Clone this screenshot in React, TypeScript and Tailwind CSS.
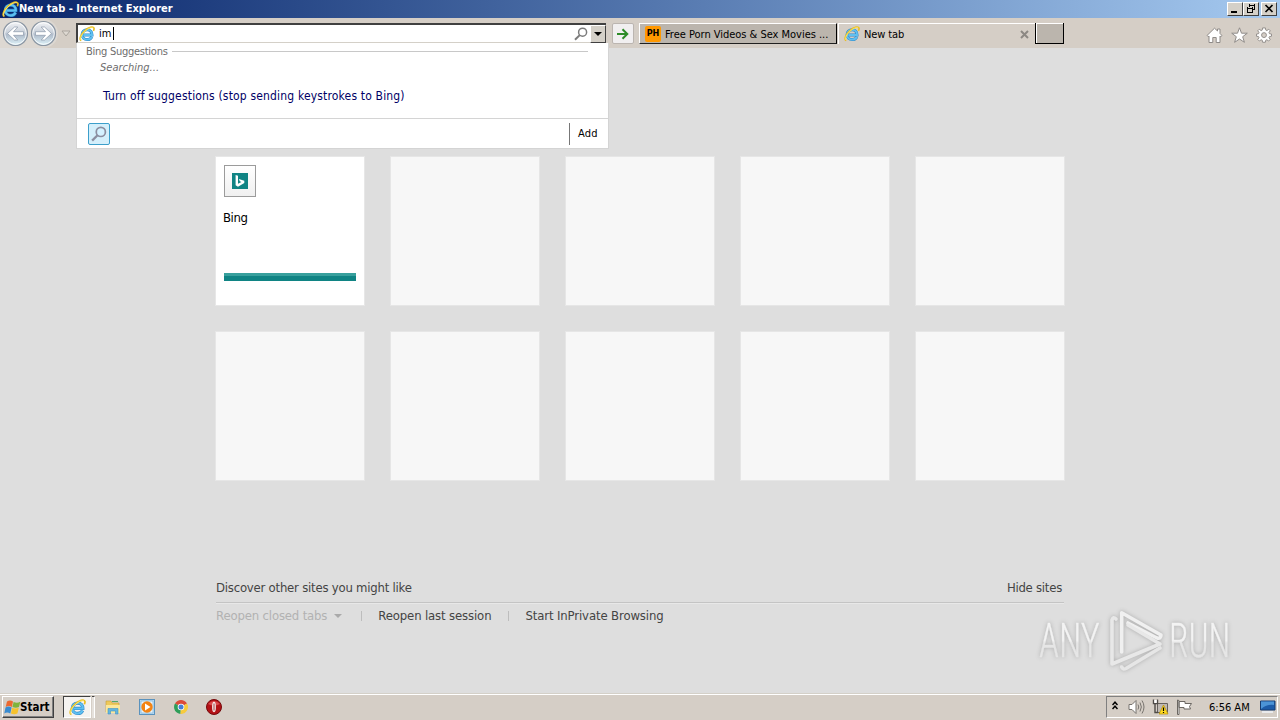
import React from 'react';

const IeLogo: React.FC<{ size?: number }> = ({ size = 16 }) => (
  <svg width={size} height={size} viewBox="0 0 16 16" className="shrink-0" fill="none">
    <path d="M12.8 10.8C12 12.5 10.3 13.6 8.3 13.6C5.2 13.6 3.1 11.5 3.1 8.7C3.1 5.8 5.3 3.8 8.2 3.8C11.2 3.8 13.1 5.8 13 8.9H4.5" stroke="#2b86c8" strokeWidth="3" />
    <path d="M12.8 10.8C12 12.5 10.3 13.6 8.3 13.6C5.2 13.6 3.1 11.5 3.1 8.7C3.1 5.8 5.3 3.8 8.2 3.8C11.2 3.8 13.1 5.8 13 8.9H4.5" stroke="#5fc0f0" strokeWidth="2" />
    <path d="M2.3 14.6C-.3 13.8 1.6 8.4 5.7 4.8C9.4 1.4 14.4-.2 15 2.3C15.2 3.2 14.8 4.2 14.4 4.9" stroke="#e9bd20" strokeWidth="1.6" />
    <path d="M2 14C.6 12.4 2.9 8 6.3 5C9.2 2.3 12.7.9 14.2 1.9" stroke="#fff17c" strokeWidth=".8" />
  </svg>
);

const NavButton: React.FC<{ forward?: boolean }> = ({ forward }) => (
  <svg width="28" height="28" viewBox="0 0 28 28" className="shrink-0">
    <defs>
      <linearGradient id={forward ? 'fwd' : 'back'} x1="0" y1="0" x2="0" y2="1">
        <stop offset="0" stopColor="#f4f5f7" />
        <stop offset=".45" stopColor="#c9d0da" />
        <stop offset=".55" stopColor="#b0bccb" />
        <stop offset="1" stopColor="#dff4fa" />
      </linearGradient>
    </defs>
    <circle cx="14.5" cy="14.5" r="12" fill={forward ? 'url(#fwd)' : 'url(#back)'} stroke="#8a95a2" strokeWidth="1.2" />
    <circle cx="14.5" cy="14.5" r="10.8" fill="none" stroke="#fff" strokeOpacity=".8" />
    <path
      transform={forward ? 'rotate(180 14.25 14.25)' : 'translate(.5 .5)'}
      d="M6 14L13 7.5H16.3L12 12.2H22V15.8H12L16.3 20.5H13Z"
      fill="#fff"
      stroke="#8d99aa"
      strokeWidth=".7"
    />
  </svg>
);

const Magnifier: React.FC<{ size: number; colour: string; fill?: string }> = ({ size, colour, fill = 'none' }) => (
  <svg width={size} height={size} viewBox="0 0 14 14">
    <circle cx="8.6" cy="5.2" r="4" fill={fill} stroke={colour} strokeWidth="1.5" />
    <path d="M5.7 8.1L1 12.8" stroke={colour} strokeWidth="2" />
  </svg>
);

const WindowButton: React.FC<{ children: React.ReactNode }> = ({ children }) => (
  <div className="h-[14px] w-4 border border-t-white border-l-white border-r-[#404040] border-b-[#404040] bg-[#d4d0c8]">
    <svg width="14" height="12" viewBox="0 0 14 12" fill="none" stroke="#000" shapeRendering="crispEdges">
      {children}
    </svg>
  </div>
);

const TitleBar: React.FC = () => (
  <div className="flex h-[18px] items-center bg-linear-to-r from-[#0a246a] to-[#a6caf0] pl-[2px] pr-[3px]">
    <IeLogo size={17} />
    <span className="whitespace-nowrap pt-px text-[11px] font-bold text-white tracking-[0.03px]">New tab - Internet Explorer</span>
    <div className="ml-auto flex">
      <WindowButton>
        <path d="M3 9H9" strokeWidth="2" />
      </WindowButton>
      <WindowButton>
        <path d="M5 2H11M5.5 1V4M10.5 1V7M9 6.5H11M3 5H9M3.5 4V10M8.5 4V10M3 9.5H9" />
      </WindowButton>
      <div className="ml-[2px]">
        <WindowButton>
          <path d="M3.5 2L10.5 9M10.5 2L3.5 9" strokeWidth="1.7" shapeRendering="auto" />
        </WindowButton>
      </div>
    </div>
  </div>
);

const SuggestionList: React.FC = () => (
  <div className="absolute left-0 top-5 z-10 flex h-[106px] w-[533px] flex-col border border-t-0 border-[#d4d4d4] bg-white">
    <div className="flex h-4 items-center pl-[9px] pr-[20px]">
      <span className="whitespace-nowrap pt-[2px] text-[11px] tracking-[-0.26px] text-[#6d6d6d]">Bing Suggestions</span>
      <div className="ml-1 h-px flex-1 bg-[#c8c8c8]" />
    </div>
    <div className="h-4 pl-[23px] text-[11px] leading-[18px] italic tracking-[0.01px] text-[#6d6d6d]">Searching...</div>
    <div className="mt-3 h-[18px] whitespace-nowrap pl-[26px] text-[12px] leading-[18px] tracking-[0.17px] text-[#000066]">
      Turn off suggestions (stop sending keystrokes to Bing)
    </div>
    <div className="mt-auto flex h-[30px] items-center border-t border-[#d4d4d4] pl-[11px]">
      <div className="flex h-[22px] w-[22px] items-center justify-center rounded-[2px] border border-[#3c9fcb] bg-[#d4effb]">
        <Magnifier size={16} colour="#8b8ea0" fill="#d4f1ff" />
      </div>
      <div className="ml-auto flex h-[22px] w-[39px] items-center border-l border-[#777] pl-2 pt-[2px] text-[11px] tracking-[0.2px] text-black">Add</div>
    </div>
  </div>
);

const AddressBar: React.FC = () => (
  <div className="relative ml-[5px] h-[21px] w-[530px] shrink-0">
    <div className="flex h-5 items-center border-t-2 border-l-2 border-b border-t-[#404040] border-l-[#404040] border-b-[#d4d0c8] bg-white pl-px">
      <IeLogo />
      <span className="ml-1 pt-[2px] text-[11px] text-black">im</span>
      <div className="ml-[2px] h-[13px] w-px bg-black" />
      <div className="ml-auto mr-[2px]">
        <Magnifier size={14} colour="#7b7b7b" />
      </div>
      <div className="flex h-[18px] w-4 items-center justify-center border border-t-white border-l-white border-r-[#404040] border-b-[#404040] bg-[#d4d0c8]">
        <svg width="8" height="4" viewBox="0 0 8 4">
          <path d="M0 0H8L4 4Z" />
        </svg>
      </div>
    </div>
    <SuggestionList />
  </div>
);

const BrowserBar: React.FC = () => (
  <div className="flex h-[30px] bg-[#d5cec6] pt-[5px]">
    <div className="-mt-1 flex h-[29px] w-[58px] shrink-0 rounded-r-2xl bg-[#ddd8d2] pl-[1px]">
      <NavButton />
      <NavButton forward />
    </div>
    <svg width="10" height="8" viewBox="0 0 10 8" className="ml-[3px] mt-[7px] shrink-0">
      <path d="M1 1H9L5 6Z" fill="#ded9d2" stroke="#aaa59e" />
    </svg>
    <AddressBar />
    <div className="ml-[6px] flex h-[21px] w-[22px] shrink-0 items-center justify-center rounded-[2px] border border-[#bbb5b0] bg-[#f1eff0]">
      <svg width="12" height="12" viewBox="0 0 12 12" fill="none" stroke="#2d8c28" strokeWidth="2">
        <path d="M0 6H10M5.5 1.2L10.3 6L5.5 10.8" />
      </svg>
    </div>
    <div className="ml-[5px] flex h-[21px] w-[198px] shrink-0 items-center border-t border-l border-r border-b border-t-white border-l-white border-r-black border-b-[#202020] bg-[#bbb5ad] pl-[5px]">
      <div className="flex h-4 w-4 items-center justify-center rounded-[2px] bg-[#ff9800] pt-px text-[9px] font-bold text-black">PH</div>
      <span className="ml-1 whitespace-nowrap pt-[3px] text-[11px] text-black tracking-[-0.02px]">Free Porn Videos &amp; Sex Movies ...</span>
    </div>
    <div className="ml-px flex h-[21px] w-[197px] shrink-0 items-center border-t border-l border-white pl-[5px] pr-[6px]">
      <IeLogo />
      <span className="ml-1 pt-[2px] text-[11px] tracking-[-0.1px] text-black">New tab</span>
      <svg width="9" height="9" viewBox="0 0 9 9" className="ml-auto" stroke="#8c8883" strokeWidth="2">
        <path d="M1 1L8 8M8 1L1 8" />
      </svg>
    </div>
    <div className="h-[21px] w-[29px] shrink-0 border-l border-r border-b border-black">
      <div className="h-full border-t border-l border-white bg-[#bbb5ad]" />
    </div>
    <div className="ml-auto mt-1 flex gap-2 pr-2">
      <svg width="17" height="17" viewBox="0 0 17 17" fill="#fff" stroke="#8f8b88">
        <path d="M1 8.5L8.5 1.2L11.5 4V2H14V6.5L16 8.5L14.8 9.7L14 9V15.5H10.2V10.5H6.8V15.5H3V9L2.2 9.7Z" />
      </svg>
      <svg width="17" height="17" viewBox="0 0 17 17" fill="#fff" stroke="#8f8b88">
        <path d="M8.5.8L10.5 6.2H16.3L11.7 9.7L13.4 15.3L8.5 12L3.6 15.3L5.3 9.7L.7 6.2H6.5Z" />
      </svg>
      <svg width="16" height="16" viewBox="0 0 17 17" fill="#fff" stroke="#8f8b88">
        <path d="M7 1H10L10.4 3.3L11.6 3.8L13.5 2.4L15.1 4L13.8 6L14.3 7.1L16.5 7.5V9.8L14.3 10.2L13.8 11.3L15.1 13.2L13.4 14.9L11.5 13.5L10.4 14L10 16.2H7L6.6 14L5.5 13.5L3.6 14.9L1.9 13.2L3.2 11.3L2.7 10.2L.5 9.8V7.5L2.7 7.1L3.2 6L1.9 4L3.5 2.4L5.4 3.8L6.6 3.3Z" />
        <circle cx="8.5" cy="8.6" r="2.6" fill="#d5cec6" />
      </svg>
    </div>
  </div>
);

const BingTile: React.FC = () => (
  <div className="flex h-[148px] flex-col bg-white px-2 pt-2 outline-1 outline-[#e7e7e7]">
    <div className="flex h-8 w-8 items-center justify-center border border-[#9b9b9b] bg-linear-to-b from-white to-[#f0f0f0]">
      <svg width="16" height="16" viewBox="0 0 16 16">
        <rect width="16" height="16" fill="#108484" />
        <path d="M3.6 2L6 2.8V10.8L9.4 9L7.8 8.2L6.9 5.9L12.3 7.7V10.1L6 13.7L3.6 12.3Z" fill="#fff" />
      </svg>
    </div>
    <span className="-ml-px mt-[12px] h-[18px] text-[13px] leading-[18px] tracking-[-0.4px] text-black">Bing</span>
    <div className="mt-[46px] h-2 w-[132px] border-t-[3px] border-[#38a09d] bg-[#108484]" />
  </div>
);

const TileGrid: React.FC = () => (
  <div className="mx-auto grid w-[848px] grid-cols-5 gap-[27px]">
    <BingTile />
    {Array.from({ length: 9 }, (_, i) => (
      <div key={i} className="h-[148px] bg-[#f7f7f7] outline-1 outline-[#e6e6e6]" />
    ))}
  </div>
);

const Footer: React.FC = () => (
  <div className="mx-auto mt-[98px] w-[848px] whitespace-nowrap text-[13px] leading-[18px] text-[#444]">
    <div className="flex h-[25px] justify-between border-b border-[#c4c4c4] pr-[2px] pt-px shadow-[0_1px_0_#e8e8e8]">
      <span className="tracking-[-0.22px]">Discover other sites you might like</span>
      <span className="tracking-[-0.25px]">Hide sites</span>
    </div>
    <div className="mt-1 flex items-center">
      <span className="tracking-[-0.16px] text-[#b2b2b2]">Reopen closed tabs</span>
      <svg width="8" height="4" viewBox="0 0 8 4" className="ml-[7px]">
        <path d="M0 0H8L4 4Z" fill="#aaa" />
      </svg>
      <div className="ml-[19px] h-2.5 w-px bg-[#bdbdbd]" />
      <span className="ml-4 tracking-[-0.14px]">Reopen last session</span>
      <div className="ml-[17px] h-2.5 w-px bg-[#bdbdbd]" />
      <span className="ml-4 tracking-[-0.12px]">Start InPrivate Browsing</span>
    </div>
  </div>
);

const Watermark: React.FC = () => (
  <div className="absolute left-[1039px] top-[560px] flex h-[64px] w-[200px] items-center font-['Roboto','Liberation_Sans',sans-serif] text-[49px] leading-none drop-shadow-[0_0_2px_#aaa]">
    <span className="w-[67px]">
      <span className="inline-block origin-left scale-x-[0.74] bg-linear-to-b from-[#f3f3f3] from-50% to-[#e6e6e6] to-55% bg-clip-text font-light text-transparent [-webkit-text-stroke:0.5px_transparent]">ANY</span>
    </span>
    <svg width="60" height="64" viewBox="0 0 60 64" fill="none" strokeWidth="3.6" strokeLinejoin="round" strokeLinecap="round" className="shrink-0">
      <path d="M15.7 44V4.7L55 27Q55 31 51 30L22 15" stroke="#f0f0f0" />
      <path d="M10 11Q7 8 6 12V56L54 36L22 17" stroke="#e8e8e8" />
      <path d="M15.7 59Q17 62 20 60.5L54 40" stroke="#e6e6e6" />
    </svg>
    <span className="ml-[3px] w-[70px]">
      <span className="inline-block origin-left scale-x-[0.72] bg-linear-to-b from-[#f3f3f3] from-50% to-[#e6e6e6] to-55% bg-clip-text font-light text-transparent [-webkit-text-stroke:0.5px_transparent]">RUN</span>
    </span>
  </div>
);

const Taskbar: React.FC = () => (
  <div className="flex h-[27px] items-center border-t border-[#d4d0c8] bg-[#d5cec6] pl-[2px] pr-[2px] shadow-[inset_0_1px_0_#fff]">
    <div className="flex h-[22px] w-[52px] items-center border border-t-white border-l-white border-r-[#404040] border-b-[#404040] pl-[1px] shadow-[inset_-1px_-1px_0_#808080]">
      <svg width="17" height="17" viewBox="0 0 17 17" className="shrink-0">
        <path d="M3 2.5Q6 .5 9 2.5L7.9 8Q5 6 1.7 8Z" fill="#ed6930" />
        <path d="M9.6 2.9Q13 4.5 16.3 2.7L15 8Q12 9.5 8.4 8Z" fill="#7fb33c" />
        <path d="M1.5 8.6Q4.5 6.6 7.6 8.6L6.3 14.4Q3 12.4 .3 14.4Z" fill="#398bd0" />
        <path d="M8.2 8.7Q11.4 10.2 14.8 8.7L13.4 14.4Q10.3 16 6.9 14.4Z" fill="#f6c22d" />
      </svg>
      <span className="-ml-px pt-px text-[11.5px] font-bold text-black">Start</span>
    </div>
    <div className="ml-[9px] flex h-[22px] w-[28px] items-center justify-center border border-t-[#404040] border-l-[#404040] border-r-white border-b-white bg-[#f5f3f0]">
      <IeLogo size={17} />
    </div>
    <div className="ml-px h-[22px] w-[3px] border-r border-t border-r-white border-t-[#404040] bg-[#e5e1dc]" />
    <svg width="16" height="16" viewBox="0 0 16 16" className="ml-[10px]">
      <path d="M1 2H6L7 4H14V13H1Z" fill="#eec95b" stroke="#c89d36" strokeWidth=".6" />
      <path d="M1 6H15V14H1Z" fill="#fbe79b" />
      <path d="M7 2H13V3H7Z" fill="#51a76a" />
      <path d="M3 15V9.5H13V15H10.5V12H5.5V15Z" fill="#64b5df" stroke="#4294c5" strokeWidth=".6" />
    </svg>
    <svg width="16" height="16" viewBox="0 0 16 16" className="ml-[18px]">
      <rect x=".5" y=".5" width="15" height="15" fill="#bfdef5" stroke="#5a92bd" />
      <rect x="2" y="2" width="12" height="12" fill="#e9f3fa" stroke="#6ca8d1" strokeWidth=".6" />
      <circle cx="8" cy="8" r="5.7" fill="#f38313" />
      <path d="M6 4.5L11.5 8L6 11.5Z" fill="#fff" />
    </svg>
    <svg width="14" height="14" viewBox="0 0 14 14" className="ml-[19px]">
      <path d="M7 7L1 3.5A7 7 0 0 1 13 3.5Z" fill="#dc4a39" />
      <path d="M7 7L1 3.5A7 7 0 0 0 6.5 14Z" fill="#2e9e59" />
      <path d="M7 7L13 3.5A7 7 0 0 1 6.5 14Z" fill="#f7cb3d" />
      <circle cx="7" cy="7" r="3.3" fill="#fff" />
      <circle cx="7" cy="7" r="2.5" fill="#477ed7" />
    </svg>
    <svg width="16" height="16" viewBox="0 0 16 16" className="ml-[18px]">
      <circle cx="8" cy="8" r="7.5" fill="#b31216" stroke="#75090c" />
      <path d="M2 5Q8-1 14 5Q8 8 2 5" fill="#dc4a4c" />
      <ellipse cx="8" cy="8" rx="1.9" ry="5.2" fill="#f5ecea" />
      <path d="M8 4.5V11.5" stroke="#8d1014" strokeWidth=".8" />
    </svg>
    <div className="ml-auto flex h-[22px] w-[172px] items-center border border-t-[#808080] border-l-[#808080] border-r-white border-b-white pl-[5px]">
      <svg width="6" height="9" viewBox="0 0 6 9" fill="none" stroke="#000" strokeWidth="1.5" className="mb-[3px]">
        <path d="M.5 4L3 1.2L5.5 4M.5 8L3 5.2L5.5 8" />
      </svg>
      <svg width="17" height="16" viewBox="0 0 17 16" className="ml-[10px]" fill="none" stroke="#77736e">
        <path d="M1 5.5H4L8 1.5V14.5L4 10.5H1Z" fill="#fff" />
        <path d="M10 5.5Q11.5 8 10 10.5M12 3.5Q14.7 8 12 12.5M14 1.5Q18 8 14 14.5" />
      </svg>
      <svg width="17" height="16" viewBox="0 0 17 16" className="ml-[7px]" fill="none">
        <path d="M5.5 4.5H15.5V13.5H5.5Z" fill="#c0bab4" stroke="#66615d" />
        <path d="M1.5.5V4.5H3V13.5H6M1.5 4.5H5.5V.5" stroke="#4f4b48" strokeWidth="1.4" />
        <path d="M3.5 1V4" stroke="#fff" strokeWidth="2.4" />
        <path d="M11.5 6L16 15H7Z" fill="#ffdb22" stroke="#b58b00" strokeWidth=".7" />
        <path d="M11.5 8.5V12M11.5 13V14" stroke="#000" strokeWidth="1.2" />
      </svg>
      <svg width="17" height="16" viewBox="0 0 17 16" className="ml-[7px]" fill="#fff" stroke="#6b6762">
        <path d="M1.5 1V15.5H3V1.5ZM3 2.5H9V4.5H15.5L13.5 7.5L14.5 10H8V8.5H3Z" />
      </svg>
      <span className="ml-4 whitespace-nowrap pt-[2px] text-[11px] text-black">6:56 AM</span>
      <svg width="16" height="14" viewBox="0 0 16 14" className="ml-auto mr-[1px] shrink-0">
        <path d="M.5 1H15V10H.5Z" fill="#1d5ca9" stroke="#193d70" />
        <path d="M1 1.5H14V5Q7 4 1 9Z" fill="#4c94d7" />
        <path d="M2 12H13" stroke="#e9eaec" strokeWidth="2" />
      </svg>
    </div>
  </div>
);

const App: React.FC = () => (
  <div className="flex h-[720px] w-[1280px] flex-col overflow-hidden bg-[#dedede] font-['DejaVu_Sans_Condensed','DejaVu_Sans',sans-serif] [font-stretch:condensed]">
    <TitleBar />
    <BrowserBar />
    <main className="relative flex-1 pt-[109px]">
      <TileGrid />
      <Footer />
      <Watermark />
    </main>
    <Taskbar />
  </div>
);

export default App;
